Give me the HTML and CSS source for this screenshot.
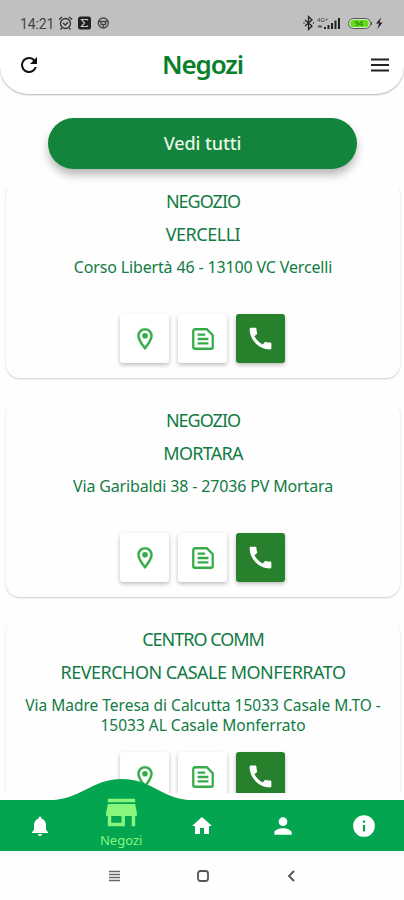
FILE: index.html
```
<!DOCTYPE html>
<html lang="it">
<head>
<meta charset="utf-8">
<meta name="viewport" content="width=device-width, initial-scale=1">
<title>Negozi</title>
<link rel="stylesheet" href="styles.css">
</head>
<body>
<svg class="defs" aria-hidden="true">
  <symbol id="pin" viewBox="0 0 24 24"><path d="M12 2C8.100 2 5 5.100 5 9c0 5.200 7 13 7 13s7-7.800 7-13c0-3.900-3.100-7-7-7zM7 9a5 5 0 0 1 10 0c0 2.900-2.900 7.200-5 9.900C9.900 16.200 7 11.900 7 9z" stroke="currentColor" stroke-width=".3"/><circle cx="12" cy="9" r="2.600"/></symbol>
  <symbol id="doc" viewBox="0 0 24 24"><path d="M4.500 3H15.500L21 8.500V19.500a1.500 1.500 0 0 1-1.500 1.500h-15A1.500 1.500 0 0 1 3 19.500v-15A1.500 1.500 0 0 1 4.500 3zM7 8h7M7 12h10M7 16h10" fill="none" stroke="currentColor" stroke-width="2.100"/></symbol>
  <symbol id="phone" viewBox="0 0 24 24"><path d="M20.010 15.380c-1.230 0-2.420-.2-3.530-.560a.977.977 0 0 0-1.010.240l-1.570 1.970c-2.830-1.350-5.480-3.900-6.890-6.830l1.950-1.660c.270-.280.350-.670.240-1.020-.370-1.110-.560-2.300-.560-3.530 0-.540-.450-.990-.990-.990H4.190C3.650 3 3 3.240 3 3.990 3 13.280 10.730 21 20.010 21c.710 0 .990-.630.990-1.180v-3.450c0-.540-.450-.990-.990-.990z"/></symbol>
</svg>
<div class="phone">
  <div class="status">
    <span class="time">14:21</span>
    <svg class="st-left" width="54" height="16" viewBox="0 0 54 16">
      <g fill="none" stroke="#333" stroke-width="1.300"><circle cx="7.500" cy="8.500" r="5"/><path d="M1 4.500 4 2M14 4.500 11 2M5 8l2.300 2L10 7.200M4 13l-1.500 1.500M11 13l1.500 1.500"/></g>
      <rect x="20" y="1.500" width="13" height="13" rx="2.500" fill="#222"/><path d="M29.500 5.500v-1h-6l3 3.500-3 3.500h6v-1" fill="none" stroke="#c0c0c0" stroke-width="1.200"/>
      <g fill="none" stroke="#444" stroke-width="1.300"><circle cx="45.300" cy="8" r="5"/><path d="M40.500 6.500h9.500M43 6.500v3h4.500v-3M45.300 9.500v3"/></g>
    </svg>
    <svg class="st-right" width="84" height="16" viewBox="0 0 84 16">
      <path d="M2 5l7 6-3.500 3.500v-13L9 5l-7 6M0.500 8h1M10 8h1" fill="none" stroke="#222" stroke-width="1.300"/>
      <text x="14" y="6.500" font-size="6" fill="#444">4G+</text>
      <path d="M15 11.500h4" stroke="#555" stroke-width="2"/>
      <path d="M22 12v2M25.500 10v4M29 8v6M32.500 5.500V14M36 3v11" stroke="#222" stroke-width="2"/>
      <rect x="45.500" y="3.500" width="22" height="10" rx="5" fill="#d5ecc8" stroke="#555"/>
      <rect x="47.200" y="5" width="18.500" height="7" rx="3.500" fill="#62dd18"/>
      <text x="51.500" y="11.300" font-size="7.500" fill="#266810">94</text>
      <path d="M68.500 7v3" stroke="#555"/>
      <path d="M78 2.500l-5 6h3l-1.500 5.500 5-6.500h-3z" fill="#222"/>
    </svg>
  </div>
  <header class="header">
    <svg class="refresh" width="24" height="24" viewBox="0 0 24 24"><path d="M17.650 6.350A7.960 7.960 0 0 0 12 4a8 8 0 1 0 7.730 10h-2.080A6 6 0 1 1 12 6c1.660 0 3.140.690 4.220 1.780L13 11h7V4l-2.350 2.350z"/></svg>
    <h1>Negozi</h1>
    <svg class="menu" width="18" height="14" viewBox="0 0 18 14"><path d="M0 1.500h18M0 7h18M0 12.500h18" stroke="#222" stroke-width="1.800"/></svg>
  </header>
  <button class="all"><span>Vedi tutti</span></button>
  <main class="list">
    <article class="card">
      <h2 class="tight">NEGOZIO</h2><h2>VERCELLI</h2>
      <p class="addr">Corso Libertà 46 - 13100 VC Vercelli</p>
      <div class="actions"><a><svg><use href="#pin"/></svg></a><a><svg><use href="#doc"/></svg></a><a class="call"><svg><use href="#phone"/></svg></a></div>
    </article>
    <article class="card">
      <h2 class="tight">NEGOZIO</h2><h2 class="snug">MORTARA</h2>
      <p class="addr">Via Garibaldi 38 - 27036 PV Mortara</p>
      <div class="actions"><a><svg><use href="#pin"/></svg></a><a><svg><use href="#doc"/></svg></a><a class="call"><svg><use href="#phone"/></svg></a></div>
    </article>
    <article class="card">
      <h2 class="tight">CENTRO COMM</h2><h2>REVERCHON CASALE MONFERRATO</h2>
      <p class="addr long">Via Madre Teresa di Calcutta 15033 Casale M.TO -<br>15033 AL Casale Monferrato</p>
      <div class="actions"><a><svg><use href="#pin"/></svg></a><a><svg><use href="#doc"/></svg></a><a class="call"><svg><use href="#phone"/></svg></a></div>
    </article>
  </main>
  <nav class="tabs">
    <svg class="hump" width="150" height="23" viewBox="0 0 150 23"><path d="M0 23V21.500C35 21.500 45 0 76 0S116 21.500 150 21.500V23z"/></svg>
    <a><svg width="24" height="24" viewBox="0 0 24 24"><path d="M12 22c1.100 0 2-.9 2-2h-4c0 1.100.9 2 2 2zm6-6v-5c0-3.070-1.640-5.640-4.500-6.320V4a1.500 1.500 0 0 0-3 0v.680C7.630 5.360 6 7.920 6 11v5l-2 2v1h16v-1l-2-2z"/></svg></a>
    <a class="active"><svg width="41" height="41" viewBox="0 0 24 24"><path d="M20 4H4v2h16V4zm1 10v-2l-1-5H4l-1 5v2h1v6h10v-6h4v6h2v-6h1zm-9 4H6v-4h6v4z"/></svg><span>Negozi</span></a>
    <a><svg width="24" height="24" viewBox="0 0 24 24"><path d="M10 20v-6h4v6h5v-8h3L12 3 2 12h3v8z"/></svg></a>
    <a><svg width="26" height="26" viewBox="0 0 24 24"><path d="M12 12a4 4 0 1 0 0-8 4 4 0 0 0 0 8zm0 2c-2.670 0-8 1.340-8 4v2h16v-2c0-2.660-5.330-4-8-4z"/></svg></a>
    <a><svg width="26" height="26" viewBox="0 0 24 24"><path d="M12 2a10 10 0 1 0 0 20 10 10 0 0 0 0-20zm1 15h-2v-6h2v6zm0-8h-2V7h2v2z"/></svg></a>
  </nav>
  <div class="system">
    <svg width="12" height="12" viewBox="0 0 12 12"><path d="M0 1.500h11M0 4.500h11M0 7.500h11M0 10.500h11" stroke="#666" stroke-width="1.700"/></svg>
    <svg width="12" height="12" viewBox="0 0 12 12"><rect x="1" y="1" width="10" height="10" rx="2.500" fill="none" stroke="#555" stroke-width="1.800"/></svg>
    <svg width="12" height="12" viewBox="0 0 12 12"><path d="M9 1 4 6l5 5" fill="none" stroke="#555" stroke-width="1.900"/></svg>
  </div>
</div>
</body>
</html>
```

FILE: styles.css
```
* { box-sizing: border-box; }
body { margin: 0; background: #fefefe; font-family: "Noto Sans", sans-serif; }
.defs { position: absolute; width: 0; height: 0; }
svg { display: block; fill: currentColor; }
.phone { width: 404px; height: 900px; display: flex; flex-direction: column; overflow: hidden; }
.status { height: 36px; flex: none; background: #c0c0c0; display: flex; align-items: flex-start; padding: 15px 17px 0 20px; }
.time { font: 14px/18px Roboto, sans-serif; color: #444; width: 38px; letter-spacing: -.1px; }
.st-right { margin-left: auto; }
.header { height: 58px; flex: none; display: flex; align-items: center; justify-content: space-between; padding: 0 15px 0 17px; border-radius: 0 0 28px 28px; background: #fff; box-shadow: 0 1px 2px rgba(0,0,0,.3); color: #111; }
h1 { margin: 0 0 3px; padding-right: 7px; font-size: 26px; line-height: 36px; font-weight: 600; color: #087f2b; letter-spacing: -1.100px; }
.all { flex: none; width: 309px; height: 51px; margin: 24px auto 0 48px; padding: 0 0 2px; border: 0; border-radius: 26px; background: #12843c; color: #e9f7e5; font: 500 18px/24px "Noto Sans", sans-serif; box-shadow: 0 6px 9px rgba(0,0,0,.27); }
.all span { letter-spacing: -.1px; }
.list { flex: none; margin-top: 12px; height: 612px; overflow: hidden; padding: 0 4px 0 6px; display: flex; flex-direction: column; gap: 21px; }
.card { flex: none; height: 197px; margin-bottom: 1px; border-radius: 14px; background: #fefefe; box-shadow: 0 1px 2px rgba(0,0,0,.2); clip-path: inset(6px -3px -4px -3px); padding: 4px 0 15px; display: flex; flex-direction: column; align-items: center; color: #117b43; }
h2 { margin: 0; height: 33px; font-size: 18px; line-height: 33px; font-weight: 400; letter-spacing: -.5px; white-space: nowrap; }
h2.tight { letter-spacing: -1px; }
h2.snug { letter-spacing: -.75px; }
.addr { margin: 6px 0 0; font-size: 16px; line-height: 20px; letter-spacing: -.15px; text-align: center; white-space: nowrap; }
.addr.long { font-size: 15.500px; letter-spacing: 0; }
.actions { display: flex; gap: 9px; margin-top: auto; padding-right: 1px; }
.actions a { width: 49px; height: 49px; border-radius: 3px; display: grid; place-items: center; background: #fff; color: #36ac49; box-shadow: 0 2px 4px rgba(0,0,0,.26); }
.actions svg { width: 26px; height: 26px; }
.actions .call { background: #26802c; color: #fff; }
.actions .call svg { width: 29px; height: 29px; }
.tabs { position: relative; flex: none; margin-top: 7px; height: 51px; background: #03a550; color: #fff; display: grid; grid-template-columns: repeat(5, 1fr); grid-template-rows: 51px; align-items: center; justify-items: center; }
.tabs a { position: relative; }
.hump { position: absolute; left: 46px; top: -21px; color: #03a550; }
.tabs .active { align-self: end; display: flex; flex-direction: column; align-items: center; color: #88f57d; font-size: 13px; line-height: 18px; padding-bottom: 2px; }
.active svg { flex: none; margin-bottom: -2px; }
.system { flex: none; height: 49px; display: flex; align-items: center; gap: 76px; padding-left: 109px; }
```
